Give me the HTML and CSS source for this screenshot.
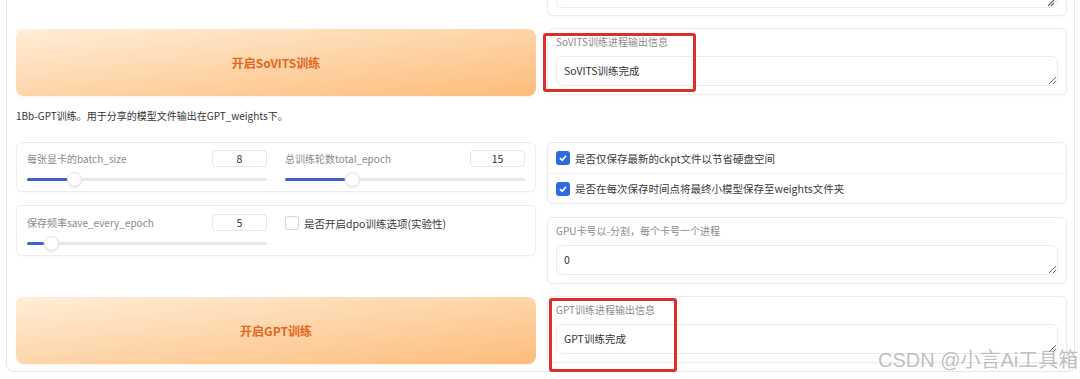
FILE: index.html
```html
<!DOCTYPE html>
<html lang="zh-CN">
<head>
    <meta charset="UTF-8">
    <meta name="viewport" content="width=device-width, initial-scale=1.0">
    <title>GPT-SoVITS 训练</title>
    <link rel="stylesheet" href="styles.css">
</head>
<body>
    <div class="frame">
        <!-- end of the block above -->
        <div class="row">
            <div></div>
            <div class="panel tail">
                <div class="tail-box">
                    <svg class="grip" width="8" height="8" viewBox="0 0 8 8"><path d="M7 1 1 7M7 4 4 7" stroke="#666" stroke-width="1.1"/></svg>
                </div>
            </div>
        </div>

        <div class="row row-sovits">
            <button class="start-btn">开启SoVITS训练</button>
            <div class="panel output">
                <div class="label">SoVITS训练进程输出信息</div>
                <textarea class="box" readonly>SoVITS训练完成</textarea>
                <div class="mark mark-sovits"></div>
            </div>
        </div>

        <p class="note">1Bb-GPT训练。用于分享的模型文件输出在GPT_weights下。</p>

        <div class="row row-params">
            <div class="col">
                <div class="panel sliders">
                    <div class="slider">
                        <div class="slider-head">
                            <span class="label">每张显卡的batch_size</span>
                            <span class="num">8</span>
                        </div>
                        <div class="track"><div class="fill" style="width: 17%"></div><div class="thumb" style="left: 19.5%"></div></div>
                    </div>
                    <div class="slider">
                        <div class="slider-head">
                            <span class="label">总训练轮数total_epoch</span>
                            <span class="num">15</span>
                        </div>
                        <div class="track"><div class="fill" style="width: 25%"></div><div class="thumb" style="left: 28%"></div></div>
                    </div>
                </div>
                <div class="panel sliders second">
                    <div class="slider">
                        <div class="slider-head">
                            <span class="label">保存频率save_every_epoch</span>
                            <span class="num">5</span>
                        </div>
                        <div class="track"><div class="fill" style="width: 7%"></div><div class="thumb" style="left: 10%"></div></div>
                    </div>
                    <label class="check plain">
                        <span class="tick off"></span>
                        是否开启dpo训练选项(实验性)
                    </label>
                </div>
            </div>
            <div class="col">
                <div class="panel checks">
                    <label class="check">
                        <span class="tick"><svg width="10" height="10" viewBox="0 0 10 10"><path d="M2 5.2 4.2 7.3 8 2.8" fill="none" stroke="#fff" stroke-width="1.7"/></svg></span>
                        是否仅保存最新的ckpt文件以节省硬盘空间
                    </label>
                    <label class="check">
                        <span class="tick"><svg width="10" height="10" viewBox="0 0 10 10"><path d="M2 5.2 4.2 7.3 8 2.8" fill="none" stroke="#fff" stroke-width="1.7"/></svg></span>
                        是否在每次保存时间点将最终小模型保存至weights文件夹
                    </label>
                </div>
                <div class="panel output">
                    <div class="label">GPU卡号以-分割，每个卡号一个进程</div>
                    <textarea class="box" readonly>0</textarea>
                </div>
            </div>
        </div>

        <div class="row row-gpt">
            <button class="start-btn">开启GPT训练</button>
            <div class="panel output">
                <div class="label">GPT训练进程输出信息</div>
                <textarea class="box" readonly>GPT训练完成</textarea>
                <div class="mark mark-gpt"></div>
            </div>
        </div>
    </div>

    <div class="watermark">CSDN @小言Ai工具箱</div>
</body>
</html>
```

FILE: styles.css
```css
* {
    margin: 0;
    padding: 0;
    box-sizing: border-box;
    font-family: 'Noto Sans CJK SC', 'Noto Sans', sans-serif;
}

body {
    background-color: #fff;
    color: #333;
    width: 1080px;
    height: 379px;
    overflow: hidden;
    position: relative;
}

.frame {
    margin-left: 6px;
    width: 1069px;
    border: 1px solid #e6e6e6;
    border-top: none;
    border-radius: 0 0 8px 8px;
    padding: 0 7px 7px 9px;
}

.row {
    display: grid;
    grid-template-columns: 1fr 1fr;
    column-gap: 11px;
    align-items: start;
}

.panel {
    position: relative;
    background-color: #fff;
    border: 1px solid #ececec;
    border-radius: 6px;
    box-shadow: 0 1px 2px rgba(0,0,0,0.03);
}

.tail {
    height: 16px;
    border-top: none;
    border-radius: 0 0 6px 6px;
    padding: 0 8px;
}

.tail-box {
    position: relative;
    height: 8px;
    border: 1px solid #ececec;
    border-top: none;
    border-radius: 0 0 6px 6px;
}

.grip {
    position: absolute;
    right: 2px;
    bottom: 0;
}

.row-sovits {
    margin-top: 12px;
}

.start-btn {
    height: 67px;
    border: none;
    border-radius: 8px;
    background: linear-gradient(to bottom right, #ffeed8, #fdbc7a);
    color: #e5661f;
    font-size: 12px;
    font-weight: bold;
    box-shadow: 0 1px 2px rgba(0,0,0,0.06);
    cursor: pointer;
    margin-top: 1px;
}

.output {
    padding: 6px 8px 8px 8px;
}

.label {
    display: block;
    font-size: 10px;
    line-height: 14px;
    color: #8a8a8a;
}

.box {
    display: block;
    width: 100%;
    height: 30px;
    margin-top: 7px;
    border: 1px solid #ececec;
    border-radius: 6px;
    padding: 6px 7px;
    font-size: 10.5px;
    line-height: 16px;
    color: #333;
    resize: vertical;
    overflow: hidden;
    outline: none;
}

.note {
    margin: 12px 0 18px;
    font-size: 10px;
    line-height: 16px;
    color: #333;
}

.col {
    display: flex;
    flex-direction: column;
    gap: 13px;
}

.sliders {
    display: grid;
    grid-template-columns: 1fr 1fr;
    column-gap: 18px;
    padding: 7px 10px 6px;
    height: 50px;
}

.sliders.second {
    padding-top: 8px;
    height: 51px;
}

.slider-head {
    display: flex;
    justify-content: space-between;
    align-items: center;
    height: 17px;
}

.num {
    width: 55px;
    height: 17px;
    border: 1px solid #e6e6e6;
    border-radius: 4px;
    font-size: 10.5px;
    line-height: 15px;
    text-align: center;
    color: #333;
}

.track {
    position: relative;
    height: 3px;
    margin-top: 11px;
    background-color: #e8e8e8;
    border-radius: 2px;
}

.fill {
    height: 3px;
    background-color: #3d64c8;
    border-radius: 2px;
}

.thumb {
    position: absolute;
    top: -6px;
    width: 15px;
    height: 15px;
    margin-left: -7px;
    border-radius: 50%;
    background-color: #fff;
    border: 1px solid #e2e2e2;
    box-shadow: 0 1px 2px rgba(0,0,0,0.08);
}

.check {
    display: flex;
    align-items: center;
    gap: 5px;
    height: 30px;
    padding-left: 8px;
    font-size: 10.5px;
    color: #3a3a3a;
}

.checks .check + .check {
    border-top: 1px solid #efefef;
}

.check.plain {
    height: 16px;
    padding-left: 0;
    margin-top: 1px;
}

.tick {
    display: flex;
    justify-content: center;
    align-items: center;
    width: 14px;
    height: 14px;
    border-radius: 3px;
    background-color: #2f6be0;
}

.tick.off {
    background-color: #fff;
    border: 1px solid #d4d4d4;
}

.mark {
    position: absolute;
    border: 3px solid #dc2f2a;
    border-radius: 3px;
}

.mark-sovits {
    left: -5px;
    top: 4px;
    width: 153px;
    height: 59px;
}

.mark-gpt {
    left: 1px;
    top: 1px;
    width: 128px;
    height: 74px;
}

.row-params {
    margin-bottom: 12px;
}

.watermark {
    position: absolute;
    left: 878px;
    top: 347px;
    font-family: 'Liberation Sans', 'Noto Sans CJK SC', sans-serif;
    font-size: 20px;
    line-height: 26px;
    color: rgba(140,140,140,0.55);
    white-space: nowrap;
}
```
